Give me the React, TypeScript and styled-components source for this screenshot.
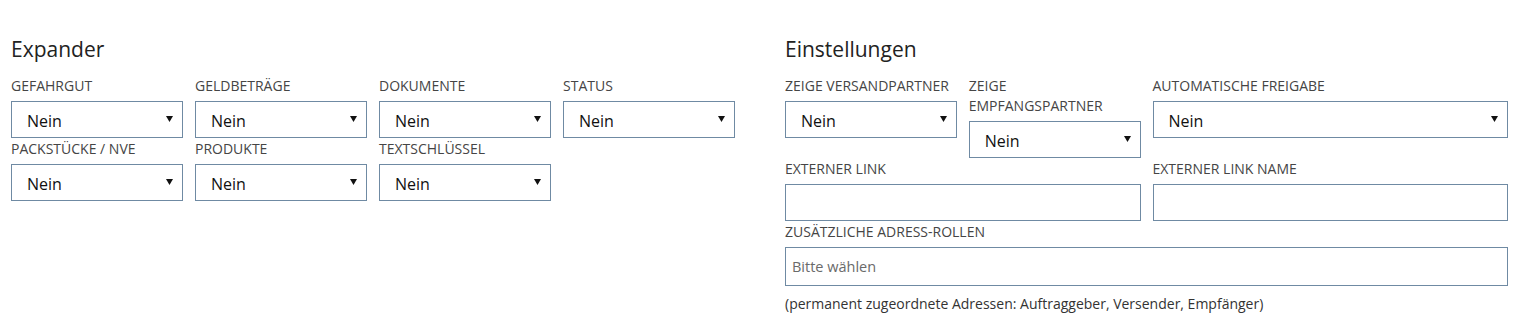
import React from "react";
import styled, { createGlobalStyle } from "styled-components";

const GlobalStyle = createGlobalStyle`
  html, body {
    margin: 0;
    padding: 0;
    background: #ffffff;
  }
  body {
    font-family: "Open Sans", "Noto Sans", Arial, sans-serif;
    color: #222;
  }
  * { box-sizing: border-box; }
`;

const Page = styled.div`
  display: grid;
  grid-template-columns: 724px 723px;
  column-gap: 50px;
  padding: 35px 0 0 11px;
  width: 1524px;
`;

const Section = styled.section`
  display: flex;
  flex-direction: column;
`;

const Heading = styled.h2`
  margin: 0 0 13px 0;
  font-size: 21px;
  line-height: 28px;
  font-weight: 400;
  color: #222;
`;

const FieldGrid = styled.div`
  display: grid;
  grid-template-columns: repeat(4, 1fr);
  column-gap: 12px;
  align-items: start;
`;

const Field = styled.div<{ $span?: number }>`
  grid-column: span ${(p) => p.$span ?? 1};
  display: flex;
  flex-direction: column;
  margin-bottom: 1px;
`;

const Label = styled.label`
  display: block;
  font-size: 14px;
  line-height: 20px;
  text-transform: uppercase;
  color: #454545;
  margin-bottom: 5px;
`;

const SelectBox = styled.div`
  position: relative;
  height: 37px;
  border: 1px solid #6f8aa3;
  background: #fff;
  padding: 9px 30px 0 15px;
  font-size: 16px;
  line-height: 20px;
  color: #111;
`;

const Arrow = styled.svg`
  position: absolute;
  right: 9px;
  top: 14px;
  width: 7px;
  height: 6px;
`;

const TextBox = styled.div`
  height: 37px;
  border: 1px solid #6f8aa3;
  background: #fff;
`;

const MultiBox = styled.div`
  height: 39px;
  border: 1px solid #6f8aa3;
  background: #fff;
  padding: 9px 6px 0 6px;
  font-size: 14.5px;
  line-height: 20px;
  color: #6a6a6a;
`;

const Help = styled.p`
  grid-column: span 4;
  margin: 7px 0 0 0;
  font-size: 14px;
  line-height: 20px;
  color: #333;
`;

const Select: React.FC<{ value: string }> = ({ value }) => (
  <SelectBox>
    {value}
    <Arrow viewBox="0 0 7 6">
      <polygon points="0,0 7,0 3.5,6" fill="#111" />
    </Arrow>
  </SelectBox>
);

const expander = [
  "Gefahrgut",
  "Geldbeträge",
  "Dokumente",
  "Status",
  "Packstücke / NVE",
  "Produkte",
  "Textschlüssel",
];

export default function App() {
  return (
    <>
      <GlobalStyle />
      <Page>
        <Section>
          <Heading>Expander</Heading>
          <FieldGrid>
            {expander.map((name) => (
              <Field key={name}>
                <Label>{name}</Label>
                <Select value="Nein" />
              </Field>
            ))}
          </FieldGrid>
        </Section>
        <Section>
          <Heading>Einstellungen</Heading>
          <FieldGrid>
            <Field>
              <Label>Zeige Versandpartner</Label>
              <Select value="Nein" />
            </Field>
            <Field>
              <Label>Zeige Empfangspartner</Label>
              <Select value="Nein" />
            </Field>
            <Field $span={2}>
              <Label>Automatische Freigabe</Label>
              <Select value="Nein" />
            </Field>
            <Field $span={2}>
              <Label>Externer Link</Label>
              <TextBox />
            </Field>
            <Field $span={2}>
              <Label>Externer Link Name</Label>
              <TextBox />
            </Field>
            <Field $span={4}>
              <Label>Zusätzliche Adress-Rollen</Label>
              <MultiBox>Bitte wählen</MultiBox>
            </Field>
            <Help>
              (permanent zugeordnete Adressen: Auftraggeber, Versender, Empfänger)
            </Help>
          </FieldGrid>
        </Section>
      </Page>
    </>
  );
}
